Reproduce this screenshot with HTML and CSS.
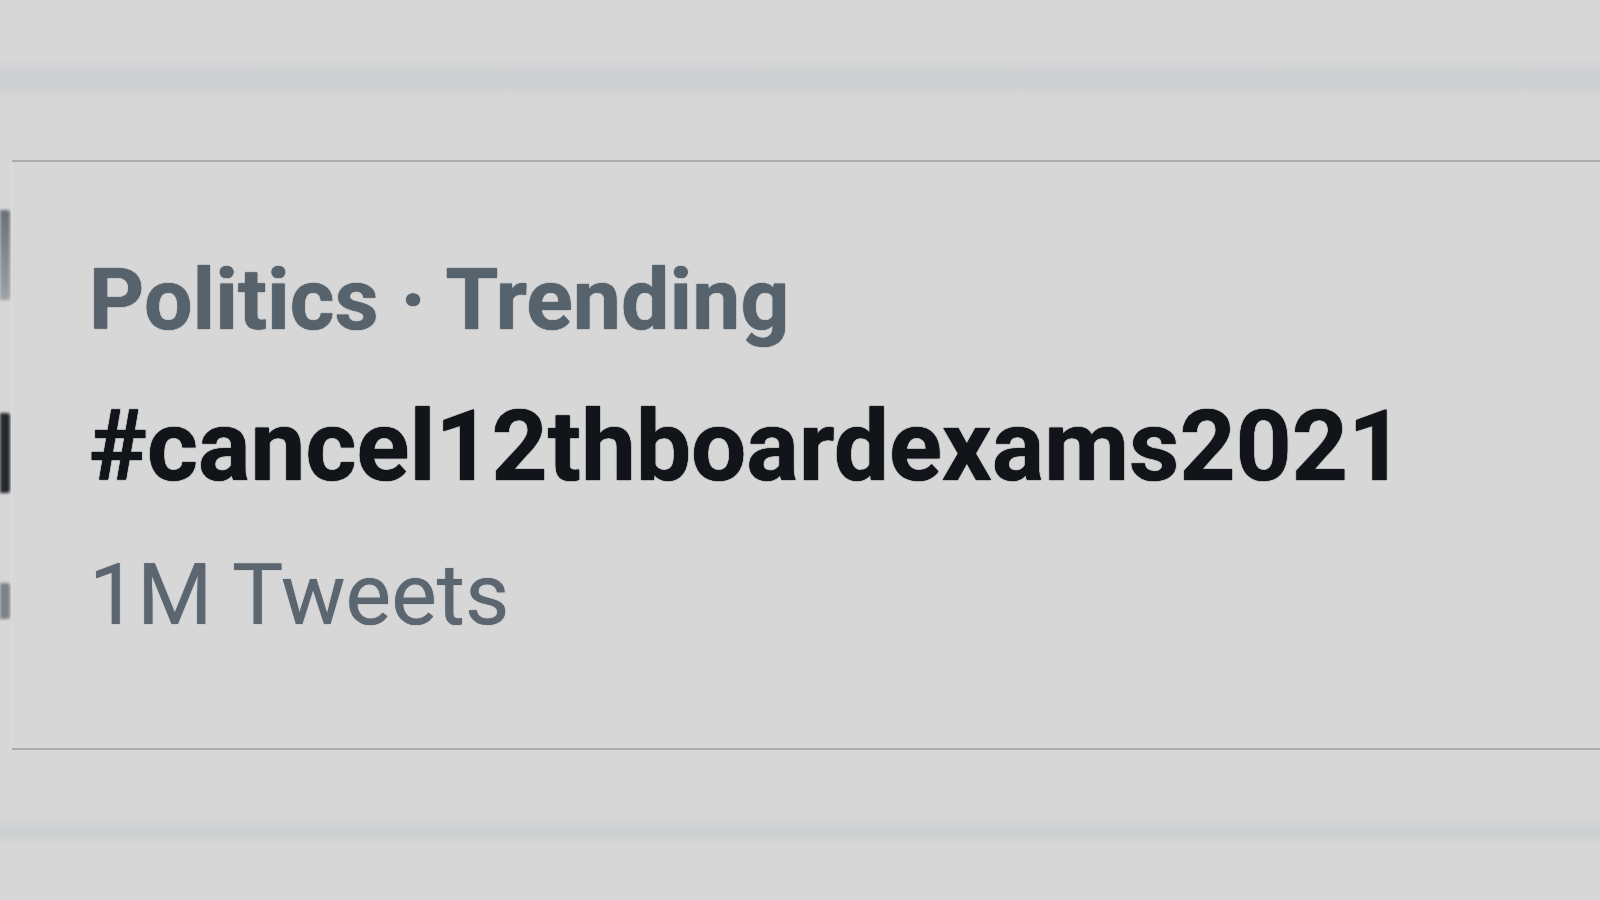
FILE: index.html
```html
<!DOCTYPE html>
<html lang="en">
<head>
<meta charset="utf-8">
<title>Trending</title>
<link rel="stylesheet" href="styles.css">
</head>
<body>
<div class="page">
  <div class="band band-top"></div>
  <div class="row">
    <div class="edge">
      <div class="blob blob-a"></div>
      <div class="blob blob-b"></div>
      <div class="blob blob-c"></div>
    </div>
    <div class="trend">
      <div class="meta">Politics · Trending</div>
      <div class="tag">#cancel12thboardexams2021</div>
      <div class="count">1M Tweets</div>
    </div>
  </div>
  <div class="band band-bottom"></div>
</div>
</body>
</html>
```

FILE: styles.css
```css
html, body {
  margin: 0;
  padding: 0;
  background: #d7d7d7;
}
.page {
  width: 1600px;
  height: 900px;
  display: flex;
  flex-direction: column;
  overflow: hidden;
  background: #d7d7d7;
  font-family: Roboto, "Liberation Sans", Arial, sans-serif;
}
.band {
  flex: none;
  background: linear-gradient(#d7d7d7, #cdcfd1 40%, #cdcfd0 65%, #d7d7d7);
}
.band-top { margin-top: 58px; height: 40px; margin-bottom: 62px; }
.band-bottom { margin-top: 68px; height: 26px; }
.row {
  display: flex;
}
.edge {
  width: 11px;
  flex: none;
  display: flex;
  flex-direction: column;
  border-right: 1px solid #dcdcdc;
  overflow: hidden;
}
.blob {
  width: 10px;
  flex: none;
  filter: blur(1.5px);
  border-radius: 0 3px 3px 0;
}
.blob-a { margin-top: 50px; height: 90px; background: linear-gradient(#6a7076, #9ca2a7); }
.blob-b { margin-top: 113px; height: 80px; background: #25292e; }
.blob-c { margin-top: 90px; height: 36px; background: #7c8287; }
.trend {
  flex: 1;
  border-top: 2px solid #a9adb0;
  border-bottom: 2px solid #a9adb0;
  padding: 94px 0 111px 77px;
}
.meta {
  font-size: 86px;
  line-height: 87px;
  font-weight: 700;
  color: #56626c;
  text-shadow: 0 0 1px #56626c, 0 0 1px #56626c;
}
.tag {
  margin-top: 55px;
  font-size: 98px;
  line-height: 97px;
  font-weight: 700;
  color: #111418;
  text-shadow: 0 0 1px #111418, 0 0 1px #111418;
}
.count {
  margin-top: 58px;
  font-size: 86px;
  line-height: 84px;
  font-weight: 400;
  color: #5b6670;
  text-shadow: 0 0 1px #5b6670;
}
```
